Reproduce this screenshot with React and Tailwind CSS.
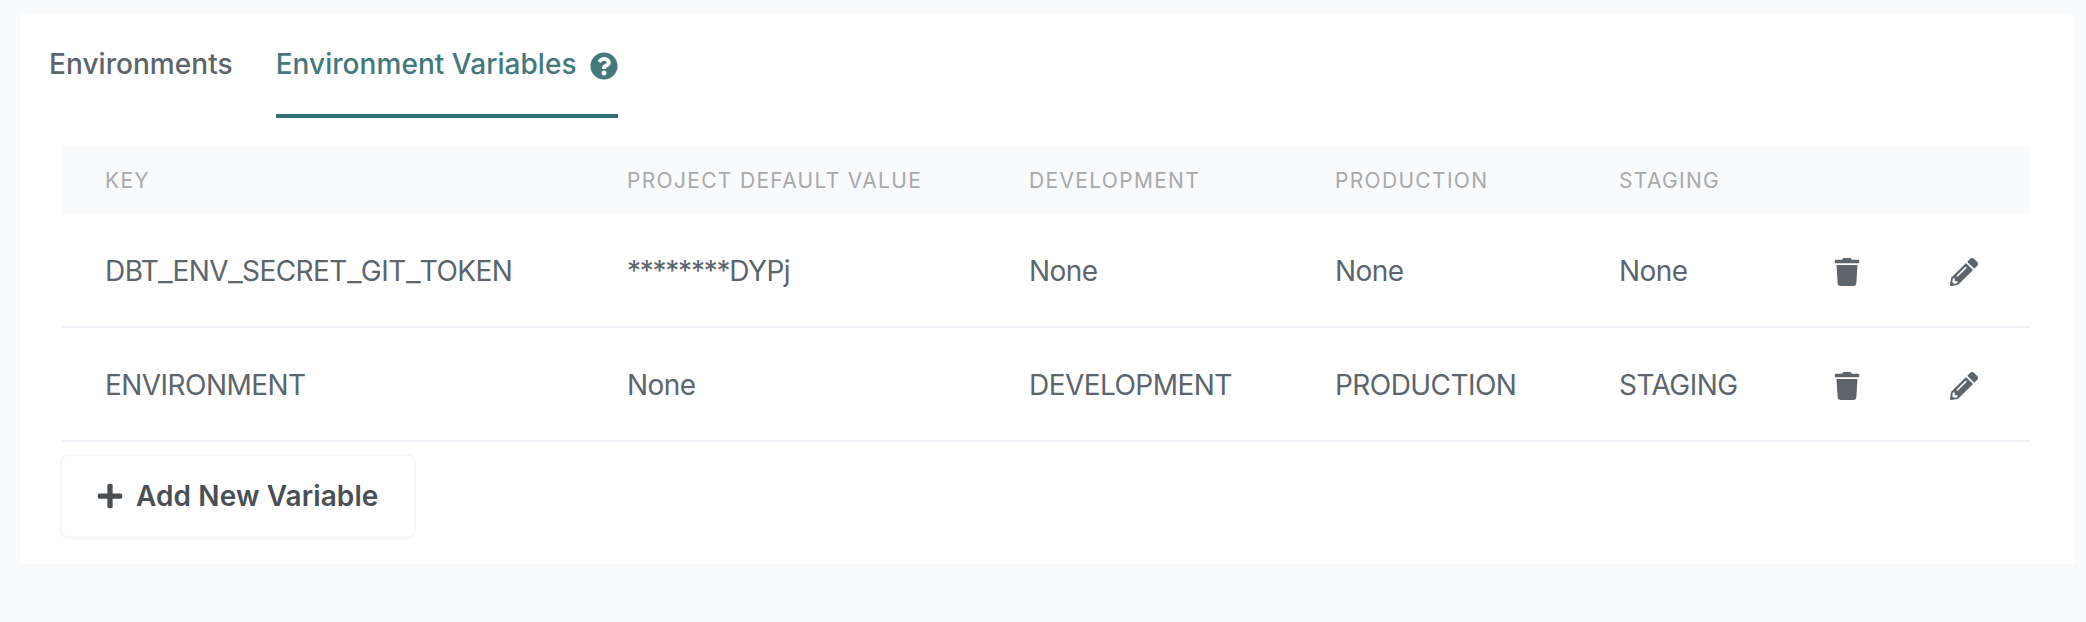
import { FaPencilAlt, FaPlus, FaQuestionCircle, FaTrash } from "react-icons/fa";

const headers = ["KEY", "PROJECT DEFAULT VALUE", "DEVELOPMENT", "PRODUCTION", "STAGING"];

const rows = [
  ["DBT_ENV_SECRET_GIT_TOKEN", "********DYPj", "None", "None", "None"],
  ["ENVIRONMENT", "None", "DEVELOPMENT", "PRODUCTION", "STAGING"],
];

const grid = "grid grid-cols-[522px_402px_306px_284px_215px_116px_80px] items-center pl-[43px]";

function Value({ text }) {
  return text.split(/(\*+|_)/).map((part, i) => {
    if (part.startsWith("*")) return <span key={i} className="tracking-[-1.25px]">{part}</span>;
    if (part === "_") return <span key={i} className="inline-block w-3.5 origin-left scale-x-[1.15] tracking-normal">_</span>;
    return part;
  });
}

export default function App() {
  return (
    <div className="h-[622px] w-full bg-[#f9fafc] pt-3.5 pr-3 pl-5 font-['Inter',sans-serif] text-[#5d656c]">
      <main className="h-[550px] bg-white pl-7">
        <nav className="flex h-[104px] gap-[43px] pl-px text-[28px] leading-[34px] font-medium tracking-[0.05px]">
          <button className="flex items-start pt-[33px] whitespace-nowrap">Environments</button>
          <button className="flex items-start gap-[13px] border-b-4 border-[#2f6f75] pt-[33px] whitespace-nowrap text-[#43797b]">
            Environment Variables
            <FaQuestionCircle className="mt-[4.5px] size-7" />
          </button>
        </nav>
        <section className="mt-7 ml-3.5 w-[1968px]">
          <div className={`${grid} h-[68px] bg-[#f9fafc] pt-0.5 text-[21px] tracking-[1.32px] text-[#a9a9a9]`}>
            {headers.map((h) => (
              <span key={h} className="whitespace-nowrap">{h}</span>
            ))}
          </div>
          {rows.map((row) => (
            <div key={row[0]} className={`${grid} h-[114px] border-b-2 border-[#eef1f5] text-[28px] tracking-[-0.55px]`}>
              {row.map((cell, i) => (
                <span key={i} className="pt-px whitespace-nowrap"><Value text={cell} /></span>
              ))}
              <button aria-label="Delete" className="pt-[3px]"><FaTrash className="h-7 w-[26px]" /></button>
              <button aria-label="Edit" className="pt-[3px]"><FaPencilAlt className="size-7" /></button>
            </div>
          ))}
          <button className="mt-3.5 flex h-20 w-[352px] items-center rounded-md bg-white pl-[34px] text-[28px] font-semibold whitespace-nowrap text-[#4a4f54] shadow-[0_0_0_2px_#f7f7f8,0_3px_3px_#0000000d]">
            <FaPlus className="mr-3 size-7" />
            <span className="tracking-[0.1px]">Add New Variable</span>
          </button>
        </section>
      </main>
    </div>
  );
}
